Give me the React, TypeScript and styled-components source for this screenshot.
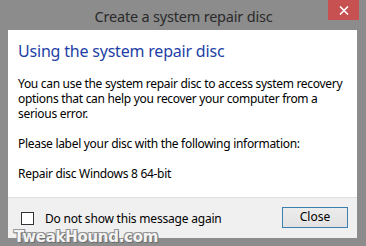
import styled, { createGlobalStyle } from 'styled-components'

const GlobalStyle = createGlobalStyle`
  html, body {
    margin: 0;
    padding: 0;
    background: #8c8c8c;
  }
`

const Window = styled.div`
  position: relative;
  width: 366px;
  height: 246px;
  box-sizing: border-box;
  background: #8c8c8c;
  display: flex;
  flex-direction: column;
  padding: 0 9px 8px 8px;
  font-family: 'Noto Sans', 'Liberation Sans', sans-serif;
  overflow: hidden;
`

const TitleBar = styled.div`
  height: 30px;
  display: grid;
  grid-template-columns: 1fr auto 1fr;
  align-items: start;
  margin-right: -2px;
`

const Title = styled.div`
  grid-column: 2;
  padding-top: 7px;
  font-size: 14.5px;
  letter-spacing: -0.2px;
  line-height: 18px;
  color: #2a2a2a;
  white-space: nowrap;
`

const CloseX = styled.div`
  grid-column: 3;
  justify-self: end;
  width: 31px;
  height: 20px;
  background: #c75050;
  display: flex;
  align-items: center;
  justify-content: center;
`

const Client = styled.div`
  flex: 1;
  display: flex;
  flex-direction: column;
  background: #ffffff;
`

const Content = styled.div`
  flex: 1;
  padding: 11px 8px 0 10px;
  color: #000000;
  font-size: 12px;
  letter-spacing: -0.3px;
  line-height: 15px;
`

const Heading = styled.div`
  font-size: 16px;
  letter-spacing: -0.2px;
  line-height: 20px;
  color: #1e3fa6;
  margin-bottom: 15px;
`

const Paragraph = styled.p`
  margin: 0 0 15px 0;
`

const Footer = styled.div`
  height: 40px;
  background: #f0f0f0;
  border-top: 1px solid #dfdfdf;
  display: flex;
  align-items: center;
  padding: 0 9px 0 13px;
  font-size: 12px;
  letter-spacing: -0.2px;
  color: #000000;
`

const CheckLabel = styled.label`
  display: flex;
  align-items: center;
  gap: 11px;
  flex: 1;
  margin-top: 1px;
`

const CheckBox = styled.span`
  width: 11px;
  height: 11px;
  border: 1px solid #333333;
  background: #ffffff;
`

const CloseButton = styled.button`
  width: 66px;
  height: 21px;
  box-sizing: border-box;
  border: 1px solid #3c7fb1;
  background: linear-gradient(#ececec, #e2e2e2);
  font-family: inherit;
  font-size: 12px;
  color: #000000;
  padding: 0 0 1px 0;
  margin-top: -2px;
`

const Watermark = styled.div`
  position: absolute;
  left: 14px;
  top: 228px;
  font-family: 'DejaVu Sans', sans-serif;
  font-weight: bold;
  font-size: 15px;
  letter-spacing: -0.3px;
  color: #f4f4f4;
  text-shadow: 1px 1px 0 #6d6d6d, -1px -1px 0 #9a9a9a, 1px -1px 0 #8a8a8a, -1px 1px 0 #8a8a8a;
`

export default function App() {
  return (
    <>
      <GlobalStyle />
      <Window>
        <TitleBar>
          <Title>Create a system repair disc</Title>
          <CloseX>
            <svg width="10" height="9" viewBox="0 0 10 9">
              <path d="M1 0.5 L9 8.5 M9 0.5 L1 8.5" stroke="#ffffff" strokeWidth="1.6" />
            </svg>
          </CloseX>
        </TitleBar>
        <Client>
          <Content>
            <Heading>Using the system repair disc</Heading>
            <Paragraph>
              You can use the system repair disc to access system recovery options that can help
              you recover your computer from a serious error.
            </Paragraph>
            <Paragraph>Please label your disc with the following information:</Paragraph>
            <Paragraph>Repair disc Windows 8 64-bit</Paragraph>
          </Content>
          <Footer>
            <CheckLabel>
              <CheckBox />
              Do not show this message again
            </CheckLabel>
            <CloseButton>Close</CloseButton>
          </Footer>
        </Client>
        <Watermark>TweakHound.com</Watermark>
      </Window>
    </>
  )
}
